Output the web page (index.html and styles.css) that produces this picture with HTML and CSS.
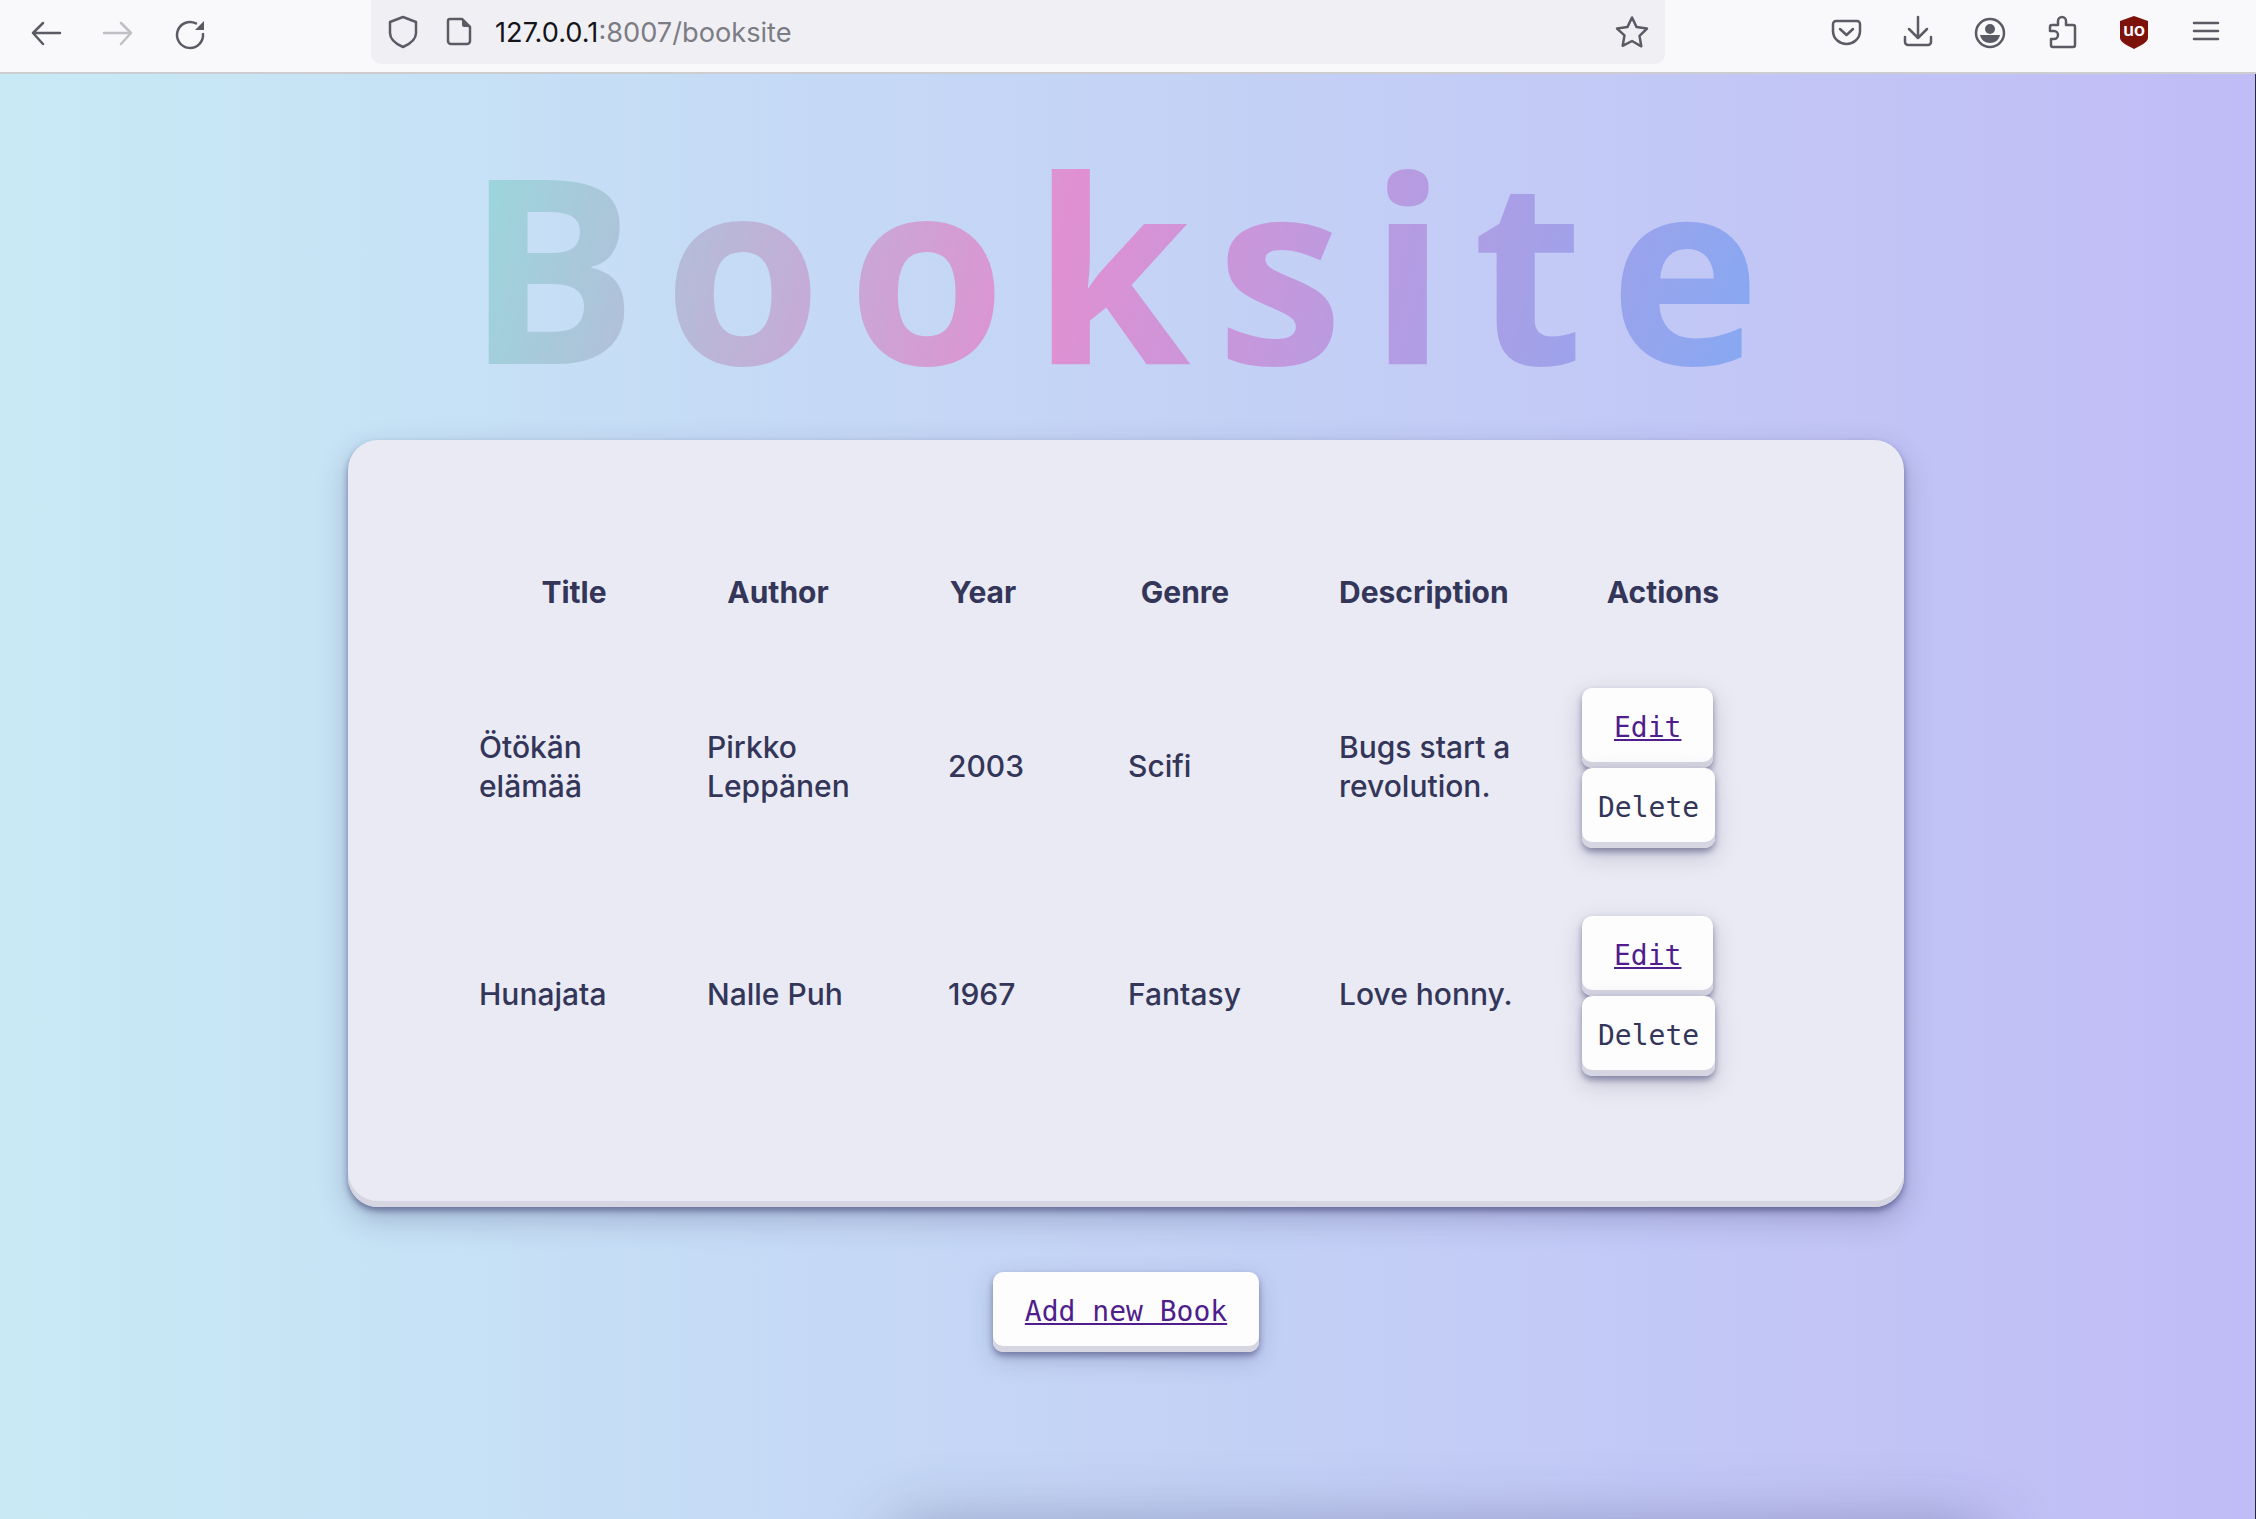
FILE: index.html
```html
<!DOCTYPE html>
<html>
<head>
  <meta http-equiv="Content-type" content="text/html; charset=utf-8">
  <title>Booksite</title>
  <link rel="stylesheet" href="styles.css">
</head>
<body>
  <div class="toolbar">
    <svg class="icon" viewBox="0 0 32 32"><path d="M30 16H3M13 6 3 16l10 11"/></svg>
    <svg class="icon icon_off" viewBox="0 0 32 32"><path d="M2 16h27M19 6l10 10-10 11"/></svg>
    <svg class="icon" viewBox="0 0 32 32"><path d="M22 6.400A13 13 0 1 0 29 17"/><path class="solid" d="M21 13 30 4v9z"/></svg>
    <div class="urlbar">
      <svg class="icon" viewBox="0 0 32 32"><path d="M16 1 29 6v11c0 7-6 11-13 14C9 28 3 24 3 17V6z"/></svg>
      <svg class="icon" viewBox="0 0 32 32"><path d="M7 3h12l8 8v14a3 3 0 0 1-3 3H8a3 3 0 0 1-3-3V5a2 2 0 0 1 2-2z"/><path class="solid" d="M19 3l8 8h-6a2 2 0 0 1-2-2z"/></svg>
      <span class="url"><span class="url_host">127.0.0.1</span>:8007/booksite</span>
      <svg class="icon star" viewBox="0 0 32 32"><path d="M16 1.500l4.600 9.600 10.400 1.500-7.500 7.300 1.800 10.400L16 25l-9.300 4.800 1.800-10.400L1 12.600l10.400-1.500z"/></svg>
    </div>
    <div class="tools">
      <svg class="icon" viewBox="0 0 32 32"><path d="M6 4h21a3 3 0 0 1 3 3v7c0 8-7 13-13.500 13S3 22 3 14V7a3 3 0 0 1 3-3z"/><path d="M10 12l6.500 6L23 12"/></svg>
      <svg class="icon" viewBox="0 0 32 32"><path d="M16 0v20M7 12l9 9 9-9M3 20v5a3 3 0 0 0 3 3h20a3 3 0 0 0 3-3v-5"/></svg>
      <svg class="icon" viewBox="0 0 32 32"><circle cx="16" cy="16" r="14"/><circle class="solid" cx="16" cy="12" r="5"/><path class="solid" d="M6 18h20c-1 5-5 8-10 8s-9-3-10-8z"/></svg>
      <svg class="icon" viewBox="0 0 32 32"><path d="M12 8V4a4 4 0 0 1 8 0v4h7a2 2 0 0 1 2 2v18a2 2 0 0 1-2 2H7a2 2 0 0 1-2-2v-6h3a4 4 0 0 0 0-8H4v-4a2 2 0 0 1 2-2z"/></svg>
      <svg class="icon" viewBox="0 0 32 32"><path class="ublock" d="M16-1 30 4v17c0 4-8 8-14 11C10 29 2 25 2 21V4z"/><text class="ublock_text" x="16" y="19" text-anchor="middle">uo</text></svg>
      <svg class="icon" viewBox="0 0 32 32"><path d="M4 6h24M4 14h24M4 22h24"/></svg>
    </div>
  </div>

  <div class="page">
    <h1><span class="logo">Booksite</span></h1>

    <div class="card">
      <table>
        <thead>
          <tr>
            <th class="c_title">Title</th>
            <th class="c_author">Author</th>
            <th class="c_year">Year</th>
            <th class="c_genre">Genre</th>
            <th class="c_desc">Description</th>
            <th class="c_actions">Actions</th>
          </tr>
        </thead>
        <tbody>
          <tr>
            <td>Ötökän elämää</td>
            <td>Pirkko Leppänen</td>
            <td>2003</td>
            <td>Scifi</td>
            <td>Bugs start a revolution.</td>
            <td>
              <a class="btn" href="#">Edit</a>
              <button class="btn btn_delete">Delete</button>
            </td>
          </tr>
          <tr>
            <td>Hunajata</td>
            <td>Nalle Puh</td>
            <td>1967</td>
            <td>Fantasy</td>
            <td>Love honny.</td>
            <td>
              <a class="btn" href="#">Edit</a>
              <button class="btn btn_delete">Delete</button>
            </td>
          </tr>
        </tbody>
      </table>
    </div>

    <a class="btn btn_add" href="#">Add new Book</a>

    <div class="next_card"></div>
  </div>
</body>
</html>
```

FILE: styles.css
```css
html, body {
  margin: 0;
  height: 1519px;
  overflow: hidden;
}
body {
  font-family: "Inter", "Noto Sans", sans-serif;
  color: #333658;
  background-color: #c4d4f5;
}

/* browser bar */
.toolbar {
  height: 74px;
  box-sizing: border-box;
  padding: 0 34px 6px 30px;
  display: flex;
  align-items: center;
  gap: 40px;
  background-color: #f9f9fb;
  border-bottom: 2px solid #cdcdcf;
}
.icon {
  width: 32px;
  height: 32px;
  flex: none;
  overflow: visible;
  fill: none;
  stroke: #5b5b66;
  stroke-width: 2.5;
  stroke-linecap: round;
  stroke-linejoin: round;
}
.icon_off {
  stroke: #bfbfc5;
}
.solid {
  fill: #5b5b66;
  stroke: none;
}
.ublock {
  fill: #7c120a;
  stroke: none;
}
.ublock_text {
  fill: #fff;
  stroke: none;
  font-family: "Lato", sans-serif;
  font-size: 19px;
  font-weight: 700;
}
.urlbar {
  width: 1294px;
  height: 64px;
  margin-left: 125px;
  padding: 0 17px 0 16px;
  box-sizing: border-box;
  display: flex;
  align-items: center;
  gap: 24px;
  align-self: flex-start;
  background-color: #f0f0f4;
  border-radius: 0 0 10px 10px;
}
.url {
  font-family: "Inter", sans-serif;
  font-size: 27.2px;
  color: #7c7c84;
  margin-left: -4px;
}
.url_host {
  color: #15141a;
}
.star {
  margin-left: auto;
}
.tools {
  margin-left: auto;
  display: flex;
  gap: 40px;
}

/* page */
.page {
  height: 1445px;
  padding-right: 3px;
  border-right: 1px solid #2a2a38;
  display: flex;
  flex-direction: column;
  align-items: center;
  background: linear-gradient(90deg, #c8eaf5, #c0bcf6);
  overflow: hidden;
}
.page > * {
  flex: none;
}
h1 {
  margin: 0;
  height: 366px;
  font-family: "Open Sans", sans-serif;
  font-size: 256px;
  line-height: 382px;
  font-weight: 700;
  letter-spacing: 25.6px;
}
.logo {
  display: inline-block;
  color: transparent;
  background: linear-gradient(105deg, #9bd6dc 3%, #e090d2 45%, #88a8f2 95%);
  -webkit-background-clip: text;
  background-clip: text;
}
.card {
  width: 1556px;
  box-sizing: border-box;
  padding: 90px 159px 97px 131px;
  background-color: #eaeaf4;
  border-radius: 30px;
  box-shadow: inset 0 -6px 0 #d6d5e2, 0 4px 6px rgba(45, 45, 95, 0.5), 0 12px 30px rgba(45, 45, 95, 0.25);
}
table {
  border-collapse: collapse;
  table-layout: fixed;
  width: 1266px;
}
th, td {
  padding: 0;
  font-size: 30px;
  font-weight: 500;
  line-height: 39px;
}
th {
  height: 124px;
  font-weight: 700;
  text-align: center;
}
td {
  box-sizing: border-box;
  height: 228px;
  padding-bottom: 3px;
  text-align: left;
}
.c_title { width: 228px; padding-right: 38px; box-sizing: border-box; }
.c_author { width: 241px; padding-right: 99px; box-sizing: border-box; }
.c_year { width: 180px; padding-right: 110px; box-sizing: border-box; }
.c_genre { width: 211px; padding-right: 97px; box-sizing: border-box; }
.c_desc { width: 242px; padding-right: 78px; box-sizing: border-box; }
.c_actions { width: 164px; }
td:nth-child(1) { padding-right: 38px; }
td:nth-child(2) { padding-right: 50px; }
td:nth-child(5) { padding-right: 40px; }
td:nth-child(6) { padding: 0 0 0 1px; }

.btn {
  display: block;
  width: max-content;
  box-sizing: border-box;
  height: 80px;
  padding: 0 32px;
  font-family: "DejaVu Sans Mono", monospace;
  font-size: 28px;
  line-height: 80px;
  color: #333658;
  background-color: #fdfdfe;
  border: 0;
  border-radius: 10px;
  box-shadow: inset 0 -6px 0 #d6d5e2, 0 4px 6px rgba(45, 45, 95, 0.45), 0 8px 24px rgba(45, 45, 95, 0.2);
}
a.btn {
  color: #4f1d8c;
}
.btn_delete {
  padding: 0 16px;
}
.btn_add {
  margin-top: 65px;
}
/* only the shadow of this one shows above the fold */
.next_card {
  width: 1090px;
  height: 400px;
  align-self: flex-start;
  margin: 174px 0 0 895px;
  background-color: #eaeaf4;
  box-shadow: 0 0 60px rgba(45, 45, 95, 0.35);
}
```
